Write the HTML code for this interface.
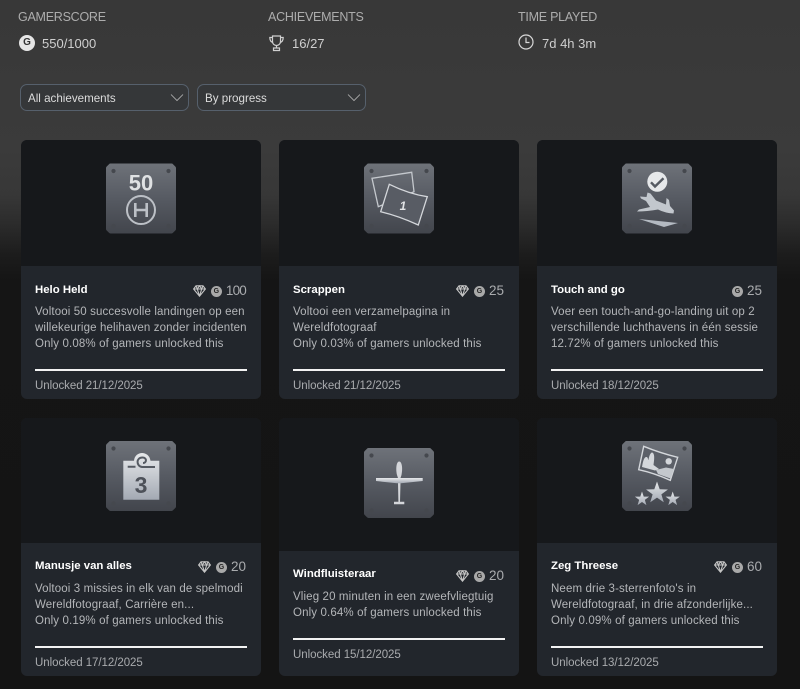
<!DOCTYPE html>
<html><head><meta charset="utf-8"><style>
*{box-sizing:border-box}
html,body{margin:0;padding:0}
body{width:800px;height:689px;overflow:hidden;position:relative;background:linear-gradient(180deg,#383838 0,#3b3b3b 150px,#373737 195px,#2b2b2b 225px,#1c1c1c 255px,#151515 280px,#141414 100%);font-family:"Liberation Sans",sans-serif;color:#c9c9c9}
#w{position:absolute;left:0;top:0;width:800px;height:689px;filter:blur(.3px)}
.a{position:absolute;white-space:nowrap}
.h{font-size:12.5px;color:#adadad;top:10px;line-height:14px;letter-spacing:-.25px}
.v{font-size:13px;color:#cfcfcf;top:37px;line-height:14px}
.dd{position:absolute;top:84px;height:27px;width:169px;border:1px solid #56606c;border-radius:7px;background:#353739;font-size:11.6px;color:#dcdcdc;line-height:27px;padding-left:7px}
.dd svg{position:absolute;right:4px;top:8px}
.card{position:absolute;width:240px;background:#22262c;border-radius:6px;overflow:hidden}
.img{position:absolute;left:0;top:0;width:240px;background:#16181b}
.img svg{position:absolute}
.t{position:absolute;left:14px;font-size:11.4px;font-weight:bold;color:#fff;line-height:14px;white-space:nowrap}
.d{position:absolute;left:14px;font-size:11.5px;letter-spacing:.13px;color:#b4b6b9;line-height:16px;white-space:nowrap}
.ln{position:absolute;left:14px;width:212px;height:2px;background:#f2f2f2}
.u{position:absolute;left:14px;font-size:11.5px;letter-spacing:-.05px;color:#a9abae;line-height:14px;white-space:nowrap}
.sc{position:absolute;right:15px;font-size:13.500px;color:#a9abae;line-height:14px;white-space:nowrap;display:flex;align-items:center}
.sc svg{display:block}
.g{width:11px;height:11px;border-radius:50%;background:#a9a9a9;color:#222;font-size:7px;font-weight:bold;line-height:11px;text-align:center;margin:0 4px 0 4px}
</style></head><body>
<svg width="0" height="0" style="position:absolute"><defs>
<linearGradient id="tile" x1="0" y1="0" x2="0" y2="1"><stop offset="0" stop-color="#6e7279"/><stop offset=".5" stop-color="#565a62"/><stop offset="1" stop-color="#42454c"/></linearGradient>
<linearGradient id="lt" x1="0" y1="0" x2="0" y2="1"><stop offset="0" stop-color="#e6e8ea"/><stop offset="1" stop-color="#a3a9b3"/></linearGradient>
<symbol id="t" viewBox="0 0 70 70" preserveAspectRatio="none"><path d="M4.500 0H65.500Q66.500 0 67 .7L69.300 3Q70 3.700 70 4.500V65.500Q70 66.500 69.300 67L67 69.300Q66.500 70 65.500 70H4.500Q3.500 70 3 69.300L.7 67Q0 66.500 0 65.500V4.500Q0 3.700 .7 3L3 .7Q3.500 0 4.500 0Z" fill="url(#tile)"/><g fill="#45484e"><circle cx="7.500" cy="7.500" r="2.100"/><circle cx="62.500" cy="7.500" r="2.100"/><circle cx="7.500" cy="62.500" r="2.100"/><circle cx="62.500" cy="62.500" r="2.100"/></g></symbol>
<symbol id="dia" viewBox="0 0 13 12"><path d="M3 .8H10L12.400 4 6.500 11.200.6 4Z M.6 4H12.400 M4.300 4 6.500 11 8.700 4 M3 .8 4.300 4 6.500 .8 8.700 4 10 .8" fill="none" stroke="#c4c4c4" stroke-width="1.100"/></symbol>
<polygon id="st" points="0,-1 .235,-.324 .951,-.309 .38,.124 .588,.809 0,.4 -.588,.809 -.38,.124 -.951,-.309 -.235,-.324"/>
</defs></svg>
<div id="w">
<div class="a h" style="left:18px">GAMERSCORE</div>
<div class="a h" style="left:268px">ACHIEVEMENTS</div>
<div class="a h" style="left:518px">TIME PLAYED</div>
<div class="a" style="left:19px;top:35px;width:16px;height:16px;border-radius:50%;background:#e6e6e6;color:#333;font-size:10px;font-weight:bold;text-align:center;line-height:16px">G</div>
<div class="a v" style="left:42px">550/1000</div>
<svg class="a" style="left:269px;top:35px" width="15" height="17" viewBox="0 0 15 17" fill="none" stroke="#d0d0d0" stroke-width="1.200"><path d="M3.500 1H11.500V6.500C11.500 9 9.500 10.500 7.500 10.500S3.500 9 3.500 6.500Z"/><path d="M3.500 2.500H.8C.8 5.500 1.800 7 4 7.500M11.500 2.500H14.200C14.200 5.500 13.200 7 11 7.500M7.500 10.500V13M4.500 13H10.500V15.500H4.500Z"/></svg>
<div class="a v" style="left:292px">16/27</div>
<svg class="a" style="left:518px;top:34px" width="16" height="16" viewBox="0 0 16 16" fill="none" stroke="#d8d8d8" stroke-width="1.200"><circle cx="8" cy="8" r="7"/><path d="M8 3.500V8.500H11.500"/></svg>
<div class="a v" style="left:542px">7d 4h 3m</div>

<div class="dd" style="left:20px">All achievements<svg width="14" height="9" viewBox="0 0 14 9" fill="none" stroke="#b8b8b8" stroke-width=".8"><path d="M1 1.500 7 7.500 13 1.500"/></svg></div>
<div class="dd" style="left:197px">By progress<svg width="14" height="9" viewBox="0 0 14 9" fill="none" stroke="#b8b8b8" stroke-width=".8"><path d="M1 1.500 7 7.500 13 1.500"/></svg></div>

<!-- Card 1 -->
<div class="card" style="left:21px;top:140px;height:259px">
<div class="img" style="height:126px"><svg style="left:85px;top:23px" width="70" height="71" viewBox="0 0 70 71"><use href="#t" y=".5" width="70" height="70"/><text x="35" y="27.500" text-anchor="middle" font-family="Liberation Sans" font-weight="bold" font-size="22" fill="#dfe1e3">50</text><circle cx="35" cy="47" r="14" fill="none" stroke="#bcc0c6" stroke-width="2"/><path d="M29.300 40V54M40.700 40V54M29.300 47H40.700" stroke="#bcc0c6" stroke-width="2.600" fill="none"/></svg></div>
<div class="t" style="top:143px">Helo Held</div>
<div class="sc" style="top:144px"><svg width="13" height="12"><use href="#dia" width="13" height="12"/></svg><span class="g" style="margin-left:5px">G</span><span style="letter-spacing:-.8px">100</span></div>
<div class="d" style="top:164px">Voltooi 50 succesvolle landingen op een<br>willekeurige helihaven zonder incidenten<br>Only 0.08% of gamers unlocked this</div>
<div class="ln" style="top:229px"></div><div class="u" style="top:239px">Unlocked 21/12/2025</div>
</div>

<!-- Card 2 -->
<div class="card" style="left:279px;top:140px;height:259px">
<div class="img" style="height:126px"><svg style="left:85px;top:23px" width="70" height="71" viewBox="0 0 70 71"><use href="#t" y=".5" width="70" height="70"/><path d="M8 15.300 47.700 9.300 50 28.700 14.300 43.700Z" fill="none" stroke="#c4c8cd" stroke-width="1.300"/><path d="M25.300 21.300Q45 31 63.300 33.700L54.300 62Q35 53 16.700 48.700Z" fill="#585c64" stroke="#d4d7db" stroke-width="1.300"/><text x="39" y="47" text-anchor="middle" font-family="Liberation Sans" font-weight="bold" font-style="italic" font-size="12" fill="#e2e4e6">1</text></svg></div>
<div class="t" style="top:143px">Scrappen</div>
<div class="sc" style="top:144px"><svg width="13" height="12"><use href="#dia" width="13" height="12"/></svg><span class="g" style="margin-left:5px">G</span>25</div>
<div class="d" style="top:164px">Voltooi een verzamelpagina in<br>Wereldfotograaf<br>Only 0.03% of gamers unlocked this</div>
<div class="ln" style="top:229px"></div><div class="u" style="top:239px">Unlocked 21/12/2025</div>
</div>

<!-- Card 3 -->
<div class="card" style="left:537px;top:140px;height:259px">
<div class="img" style="height:126px"><svg style="left:85px;top:23px" width="70" height="71" viewBox="0 0 70 71"><use href="#t" y=".5" width="70" height="70"/><circle cx="35.300" cy="18.700" r="10" fill="#e6e8ea"/><path d="M29 19.300 33 23.500 41.500 15.300" fill="none" stroke="#555a62" stroke-width="2.400"/><path d="M18 33.500 24.500 34 25.500 29.500 28.500 30.500 34 37.500 44 41.500 44.500 35 47 37 48 43 52 47.500 51.500 50.500Q43 50 36 46.500 25 48.500 15 48.500L17 46.500 28 44 24 38 19 35.500Z" fill="#c2c7cd"/><path d="M17 56 56 60 42 64Z" fill="#b4bac2"/></svg></div>
<div class="t" style="top:143px">Touch and go</div>
<div class="sc" style="top:144px"><span class="g">G</span>25</div>
<div class="d" style="top:164px">Voer een touch-and-go-landing uit op 2<br>verschillende luchthavens in één sessie<br>12.72% of gamers unlocked this</div>
<div class="ln" style="top:229px"></div><div class="u" style="top:239px">Unlocked 18/12/2025</div>
</div>

<!-- Card 4 -->
<div class="card" style="left:21px;top:418px;height:258px">
<div class="img" style="height:125px"><svg style="left:85px;top:23px" width="70" height="70" viewBox="0 0 70 70"><use href="#t" width="70" height="70"/><path d="M17.300 19.700H28C29 9.500 43 9.500 44.500 19.700H53.300V58.700H17.300Z" fill="url(#lt)"/><path d="M21.700 25.700H29.500" stroke="#555a62" stroke-width="2"/><path d="M49 26H36C30 25 30 16.500 36.500 16.500 41 16.500 41 22 37 22" fill="none" stroke="#555a62" stroke-width="2"/><text x="35" y="52" text-anchor="middle" font-family="Liberation Sans" font-weight="bold" font-size="23" fill="#4d5159">3</text></svg></div>
<div class="t" style="top:141px">Manusje van alles</div>
<div class="sc" style="top:142px"><svg width="13" height="12"><use href="#dia" width="13" height="12"/></svg><span class="g" style="margin-left:5px">G</span>20</div>
<div class="d" style="top:163px">Voltooi 3 missies in elk van de spelmodi<br>Wereldfotograaf, Carrière en...<br>Only 0.19% of gamers unlocked this</div>
<div class="ln" style="top:228px"></div><div class="u" style="top:238px">Unlocked 17/12/2025</div>
</div>

<!-- Card 5 -->
<div class="card" style="left:279px;top:418px;height:258px">
<div class="img" style="height:133px"><svg style="left:85px;top:30px" width="70" height="70" viewBox="0 0 70 70"><use href="#t" width="70" height="70"/><path d="M35.200 13.500C37.800 13.500 39 20 37.500 27L36.500 30V35L36 53.700H40.300V56.300H30V53.700H34.400L34 35V30L33 27C31.500 20 32.600 13.500 35.200 13.500Z" fill="#d4d6da"/><path d="M12 30H58.700V33L37 35.300H33L12 33Z" fill="url(#lt)"/></svg></div>
<div class="t" style="top:149px">Windfluisteraar</div>
<div class="sc" style="top:151px"><svg width="13" height="12"><use href="#dia" width="13" height="12"/></svg><span class="g" style="margin-left:5px">G</span>20</div>
<div class="d" style="top:171px">Vlieg 20 minuten in een zweefvliegtuig<br>Only 0.64% of gamers unlocked this</div>
<div class="ln" style="top:220px"></div><div class="u" style="top:230px">Unlocked 15/12/2025</div>
</div>

<!-- Card 6 -->
<div class="card" style="left:537px;top:418px;height:258px">
<div class="img" style="height:125px"><svg style="left:85px;top:23px" width="70" height="70" viewBox="0 0 70 70"><use href="#t" width="70" height="70"/><path d="M21.700 5.300Q38 12 55.700 16.300L48.300 39.300Q32 32 16.700 28.700Z" fill="#5c6068" stroke="#d4d7db" stroke-width="1.400"/><path d="M20 26C21 20 22 16 24.500 16 26 16 26 19 26.500 19 27 15 29 10 31 12 33 14 32 20 31.500 24L37 28 33 29.500Z" fill="#d4d7db"/><circle cx="46.700" cy="20.300" r="3.200" fill="#d4d7db"/><path d="M36 33 34 29 44 26.500 52 28 48.500 37.500Z" fill="#c4c8cd"/><use href="#st" transform="translate(35 52) scale(11.500)" fill="url(#lt)"/><use href="#st" transform="translate(20 58) scale(7.500)" fill="url(#lt)"/><use href="#st" transform="translate(50.700 58) scale(7.500)" fill="url(#lt)"/></svg></div>
<div class="t" style="top:141px">Zeg Threese</div>
<div class="sc" style="top:142px"><svg width="13" height="12"><use href="#dia" width="13" height="12"/></svg><span class="g" style="margin-left:5px">G</span>60</div>
<div class="d" style="top:163px">Neem drie 3-sterrenfoto's in<br>Wereldfotograaf, in drie afzonderlijke...<br>Only 0.09% of gamers unlocked this</div>
<div class="ln" style="top:228px"></div><div class="u" style="top:238px">Unlocked 13/12/2025</div>
</div>
</div>
</body></html>
